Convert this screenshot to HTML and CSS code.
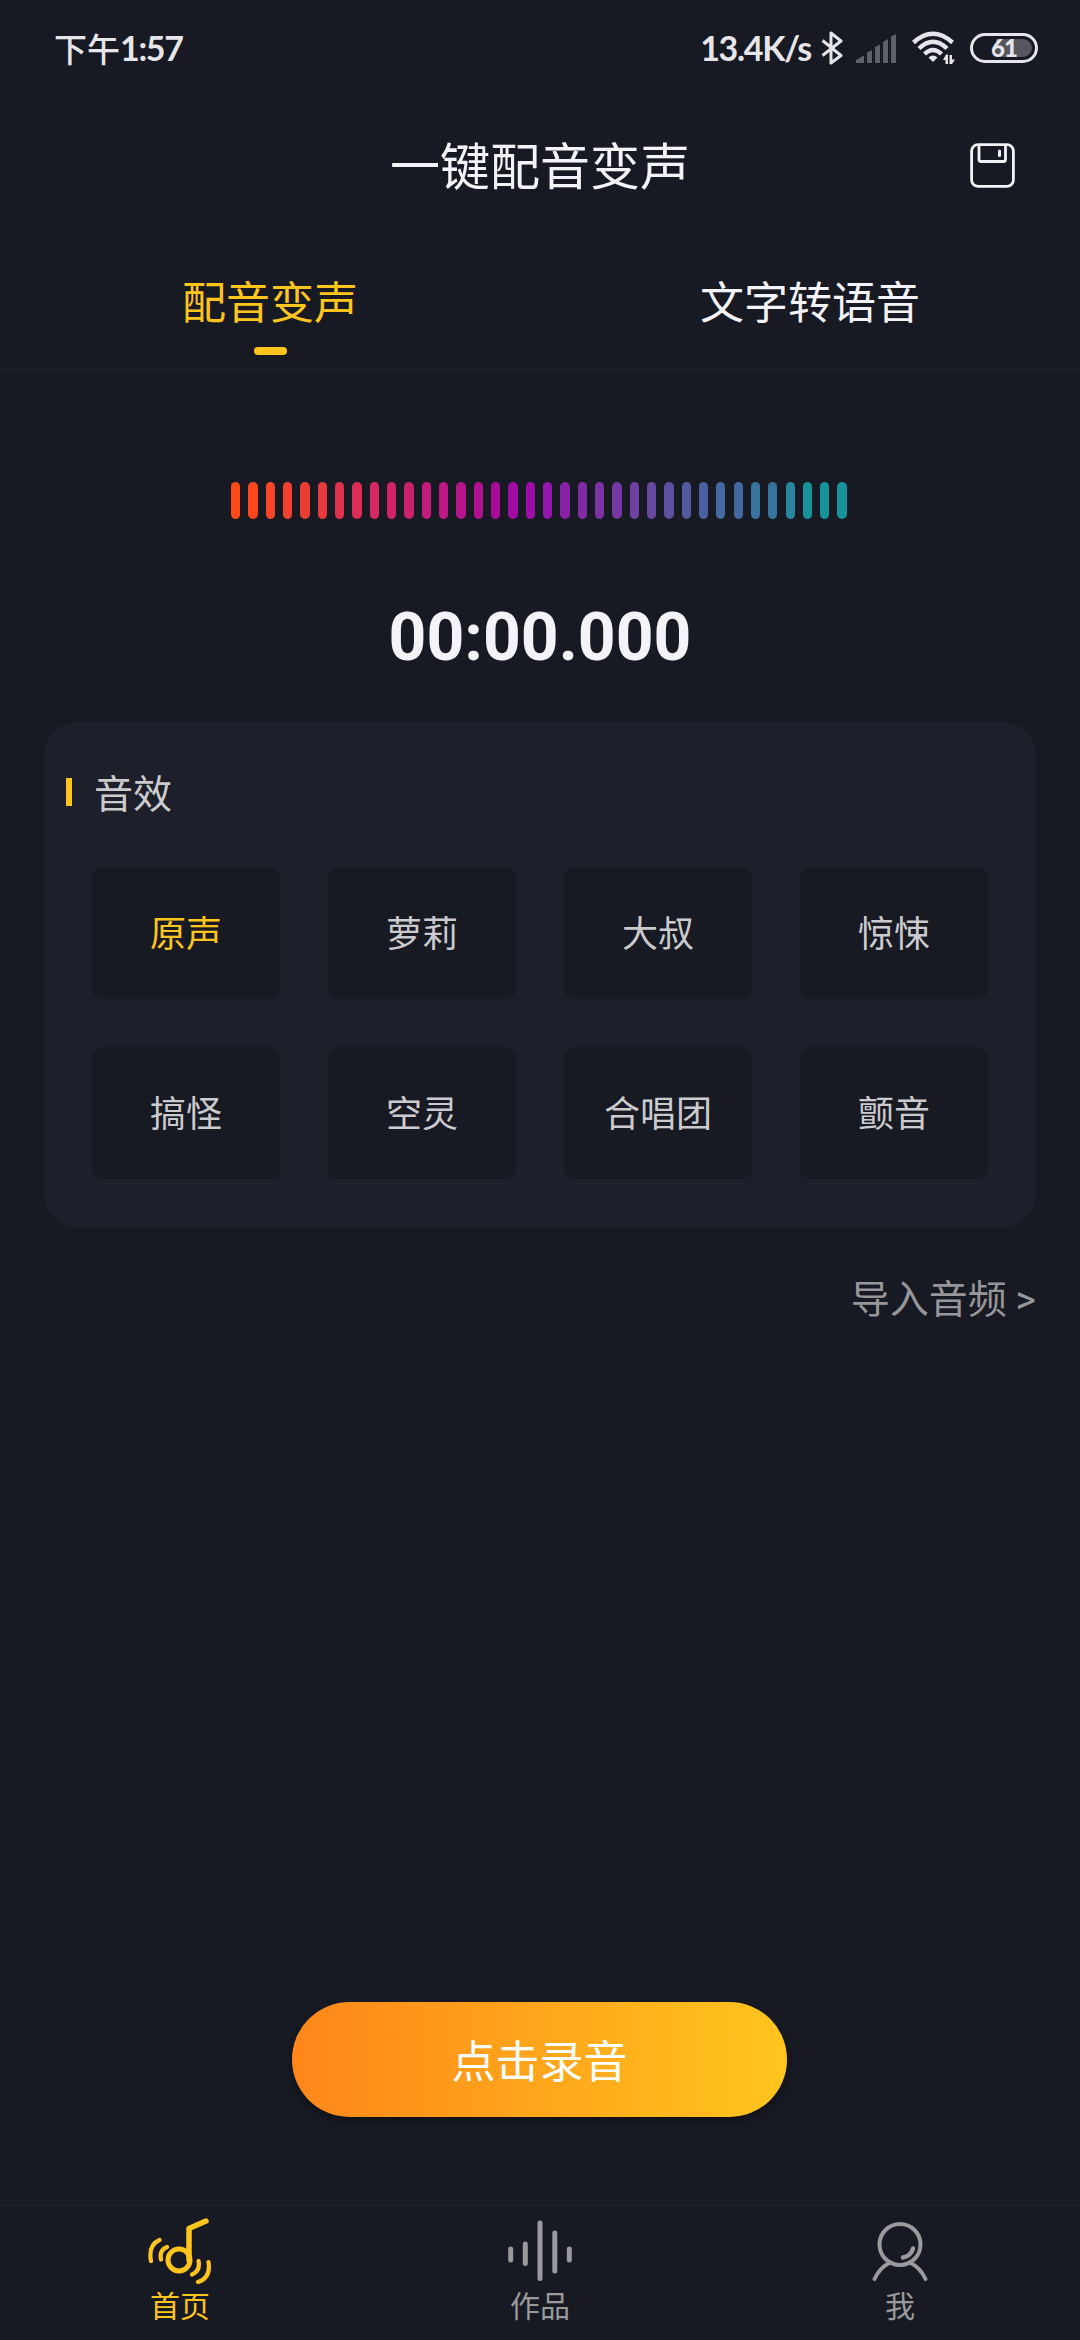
FILE: index.html
```html
<!DOCTYPE html>
<html lang="zh-CN">
<head>
<meta charset="utf-8">
<title>一键配音变声</title>
<link rel="stylesheet" href="styles.css">
</head>
<body>
<div class="screen">
  <div class="status">
    <div class="clock"><span class="ampm">下午</span><span class="time">1:57</span></div>
    <div class="status-right">
      <span class="speed">13.4K/s</span>
      <svg class="bt" width="22" height="34" viewBox="0 0 22 34" fill="none" stroke="#e6e6ea" stroke-width="3" stroke-linejoin="round"><path d="M1.500 9.500 20 24.500 10 32V2L20 10 1.500 24.500"/></svg>
      <svg class="signal" width="40" height="29" viewBox="0 0 40 29" fill="#5f616a"><path d="M0 29V26L8 21.500V29ZM11 29V18.500L16 16V29ZM19 29V13L24 10.500V29ZM27 29V8L32 5V29ZM35 29V2.500L40 0V29Z"/></svg>
      <svg class="wifi" width="43" height="34" viewBox="0 0 43 34"><g fill="none" stroke="#e6e6ea" stroke-width="4.400"><path d="M1.500 11.500Q21 -6 40.500 11.500"/><path d="M7 17.500Q21 4 35 17.500"/><path d="M12.500 23Q21 15 29.500 23"/></g><path d="M16.500 26.500Q21 22.500 25.500 26.500L21 31Z" fill="#e6e6ea"/><path d="M31 29 34 23.500H36V33H33.500V29ZM37.500 24H40V28.500H43L40 33H37.500Z" fill="#e6e6ea"/></svg>
      <div class="battery"><span class="level"></span><span class="percent">61</span></div>
    </div>
  </div>

  <header class="header">
    <h1>一键配音变声</h1>
    <svg class="save" width="45" height="45" viewBox="0 0 45 45" fill="none" stroke="#f4f3f8" stroke-width="2.800"><rect x="1.600" y="1.600" width="41.800" height="41.800" rx="6.500"/><path d="M9 2V16.500Q9 18.500 11 18.500H33.500Q35.500 18.500 35.500 16.500V2"/><path d="M29.500 8V12.500" stroke-width="3" stroke-linecap="round"/></svg>
  </header>

  <nav class="tabs">
    <div class="tab active">配音变声<i class="mark"></i></div>
    <div class="tab">文字转语音</div>
  </nav>

  <main class="content">
    <div class="wave" id="wave"></div>
    <div class="timer">00:00.000</div>
    <section class="card">
      <h2><i></i><span>音效</span></h2>
      <div class="effects">
        <div class="effect active">原声</div>
        <div class="effect">萝莉</div>
        <div class="effect">大叔</div>
        <div class="effect">惊悚</div>
        <div class="effect">搞怪</div>
        <div class="effect">空灵</div>
        <div class="effect">合唱团</div>
        <div class="effect">颤音</div>
      </div>
    </section>
    <div class="import">导入音频 <span>&gt;</span></div>
    <div class="record">点击录音</div>
  </main>

  <footer class="bottom">
    <div class="item active">
      <svg width="66" height="68" viewBox="0 0 66 68" fill="none" stroke="#ffc51d" stroke-linecap="round" stroke-linejoin="round"><circle cx="32" cy="44" r="11" stroke-width="5"/><path d="M42 44V12.500L59 5" stroke-width="5.500"/><path d="M20 31Q12 34 14 43.500M12.500 24Q1 29 4 45" stroke-width="4.200"/><path d="M51.500 45Q53.500 55 45 58.500M61.500 46Q64 62 51 66" stroke-width="4.200"/></svg>
      <span>首页</span>
    </div>
    <div class="item">
      <svg width="66" height="68" viewBox="0 0 66 68" fill="none" stroke="#9a9a9c" stroke-width="5" stroke-linecap="round"><path d="M3.700 33V44M18.300 28V47.500M33 7V62.500M47.800 17V55M62.300 33V44"/></svg>
      <span>作品</span>
    </div>
    <div class="item">
      <svg width="66" height="68" viewBox="0 0 66 68" fill="none" stroke="#9a9a9c" stroke-width="4" stroke-linecap="round"><circle cx="33" cy="28.500" r="20.500"/><path d="M7.500 63Q13 51 23.500 46.500M58.500 63Q53 51 42.500 46.500"/><path d="M46 32.500Q44 40 36 41.500" stroke-width="4.500"/></svg>
      <span>我</span>
    </div>
  </footer>
</div>
<script src="wave.js"></script>
</body>
</html>
```
FILE: wave.js
```js
const colors = [
  "#ff4a18", "#ff471c", "#f64527", "#f3412f", "#ec3d35", "#e63a3e",
  "#e0304d", "#db2d57", "#d62961", "#d02466", "#c8226e", "#c21b7b",
  "#bd1884", "#b7158b", "#b11191", "#a80b9a", "#a00ca3", "#9b0ea8",
  "#9416aa", "#8822a7", "#812aa6", "#7c31a5", "#7538a2", "#6e40a1",
  "#67489f", "#5e50a0", "#54589f", "#4b60a0", "#44689f", "#43689f",
  "#38749f", "#36749e", "#27859d", "#17939b", "#16939b", "#16939b"
];
const wave = document.getElementById("wave");
for (const color of colors) {
  const bar = document.createElement("i");
  bar.style.background = color;
  wave.appendChild(bar);
}
```
FILE: styles.css
```css
* { box-sizing: border-box; }
body { margin: 0; background: #171923; }
h1, h2 { margin: 0; font-weight: 400; }
svg { display: block; flex: none; }

.screen {
  width: 1080px;
  height: 2340px;
  display: flex;
  flex-direction: column;
  background: #171923;
  color: #f4f3f8;
  font-family: "Noto Sans CJK SC", sans-serif;
  white-space: nowrap;
}

.status {
  height: 98px;
  padding: 0 42px 2px 54px;
  display: flex;
  justify-content: space-between;
  align-items: center;
  color: #e6e6ea;
}
.clock { display: flex; align-items: center; }
.ampm { font-size: 33px; font-weight: 500; line-height: 40px; }
.time, .speed {
  font-family: Lato, sans-serif;
  font-weight: 700;
  font-size: 34px;
  line-height: 40px;
  letter-spacing: -1.300px;
}
.status-right { display: flex; align-items: center; }
.bt { margin-left: 10px; }
.signal { margin-left: 13px; }
.wifi { margin-left: 16px; }
.battery {
  margin-left: 15px;
  width: 68px;
  height: 30px;
  padding: 3px;
  border: 3px solid #e6e6ea;
  border-radius: 15px;
  position: relative;
  display: flex;
  justify-content: flex-end;
}
.level { width: 36px; height: 18px; background: #55565f; border-radius: 0 9px 9px 0; }
.percent {
  position: absolute;
  inset: 0;
  text-align: center;
  letter-spacing: -1px;
  font: 900 24px/23px Lato, sans-serif;
}

.header {
  height: 134px;
  padding: 0 65px;
  display: grid;
  grid-template-columns: 45px 1fr 45px;
  align-items: center;
}
.header h1 { grid-column: 2; padding-bottom: 5px; text-align: center; font-size: 50px; line-height: 60px; }

.tabs { height: 138px; display: flex; border-bottom: 1px solid #20222c; }
.tab {
  flex: 1;
  display: flex;
  flex-direction: column;
  align-items: center;
  padding-top: 40px;
  font-size: 44px;
  line-height: 56px;
}
.tab.active { color: #ffc51d; }
.mark { width: 33px; height: 8px; margin-top: 19px; border-radius: 4px; background: #ffc51d; }

.content { flex: 1; display: flex; flex-direction: column; padding: 112px 44px 0; }
.wave { width: 616px; height: 37px; margin-left: 187px; display: flex; justify-content: space-between; }
.wave i { width: 9.300px; border-radius: 5px; }
.timer { margin-top: 79px; font: 700 66px/80px Roboto, sans-serif; text-align: center; }

.card { margin-top: 44px; height: 505px; padding: 46px 48px 48px; border-radius: 33px; background: #1d1f2a; }
.card h2 {
  margin-left: -26px;
  height: 48px;
  display: flex;
  align-items: center;
  gap: 22px;
  font-size: 39px;
  line-height: 46px;
  color: #cbcbcd;
}
.card h2 i { width: 6px; height: 28px; background: #ffc51d; }
.card h2 span { padding-bottom: 2px; }
.effects {
  margin-top: 51px;
  display: grid;
  grid-template-columns: repeat(4, 188px);
  gap: 48px;
}
.effect {
  height: 132px;
  border-radius: 11px;
  background: #171923;
  color: #cbcbcd;
  font-size: 36px;
  line-height: 128px;
  text-align: center;
}
.effect.active { color: #ffc51d; }
.import { margin-top: 44px; text-align: right; font-size: 39px; line-height: 50px; color: #979799; }
.import span { font-family: Roboto, sans-serif; }
.record {
  width: 495px;
  height: 115px;
  margin: auto auto 88px 248px;
  border-radius: 58px;
  background: linear-gradient(90deg, #ff861a, #ffc51d);
  box-shadow: 0 4px 8px rgba(0, 0, 0, .3);
  font-size: 44px;
  line-height: 114px;
  text-align: center;
  color: #fff;
}

.bottom { height: 135px; display: flex; border-top: 1px solid #20222c; color: #9a9a9c; }
.item { flex: 1; display: flex; flex-direction: column; align-items: center; padding-top: 10px; }
.item.active { color: #ffc51d; }
.item span { margin-top: 2px; font-size: 30px; line-height: 36px; }
```
